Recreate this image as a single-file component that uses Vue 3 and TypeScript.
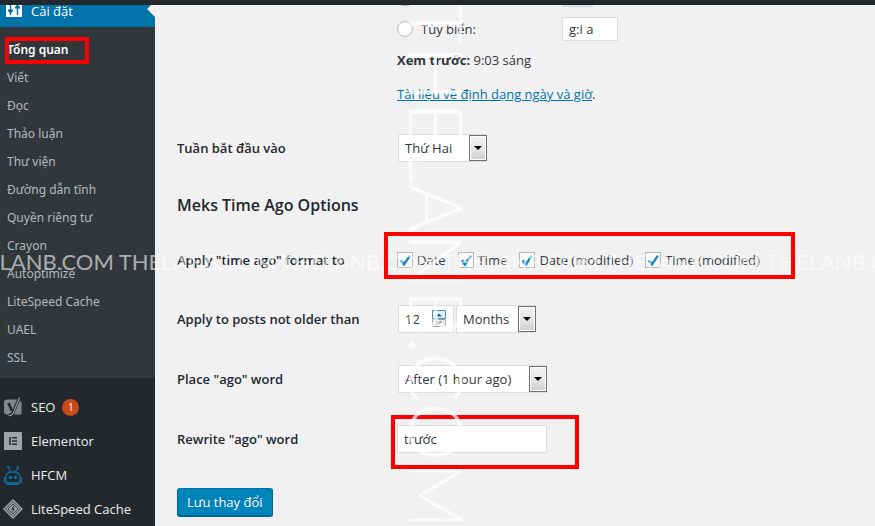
<script setup lang="ts">
import { ref } from 'vue'

interface Toggle {
  id: string
  label: string
  on: boolean
}

const submenu = [
  'Tổng quan', 'Viết', 'Đọc', 'Thảo luận', 'Thư viện', 'Đường dẫn tĩnh',
  'Quyền riêng tư', 'Crayon', 'Autoptimize', 'LiteSpeed Cache', 'UAEL', 'SSL',
]
const formats = ref<Toggle[]>([
  { id: 'date', label: 'Date', on: true },
  { id: 'time', label: 'Time', on: true },
  { id: 'date-mod', label: 'Date (modified)', on: true },
  { id: 'time-mod', label: 'Time (modified)', on: true },
])
const customFormat = ref('g:i a')
const weekStart = ref('Thứ Hai')
const amount = ref(12)
const unit = ref('Months')
const place = ref('After (1 hour ago)')
const word = ref('trước')
const stamp = 'THELANB.COM '
</script>

<template>
  <div class="page">
    <div class="topbar"></div>
    <div class="body">
      <nav class="sidebar">
        <a href="#" class="current">
          <svg class="icon" viewBox="0 0 20 20" aria-hidden="true">
            <path fill="#fff" d="M3 2h16v16H3z" />
            <path stroke="#0073aa" stroke-width="1.4" d="M7.500 4v12M14.500 4v12" />
            <path stroke="#0073aa" stroke-width="2" d="M5 11.500h5M12 8.500h5" />
            <path fill="#0073aa" d="M5.500 12h4L7.500 15zM12.500 8h4L14.500 5z" />
          </svg>
          <span>Cài đặt</span>
        </a>
        <ul class="submenu">
          <li v-for="(item, i) in submenu" :key="item" :class="{ active: i === 0 }">
            <a href="#">{{ item }}</a>
          </li>
        </ul>
        <ul class="plugins">
          <li>
            <a href="#">
              <svg class="icon" viewBox="0 0 20 20" aria-hidden="true">
                <path fill="#82878c" d="M4 2.500h11L10 16l-2 1.500H4q-3 0-3-3v-9q0-3 3-3zM17 3.500q1.500 1 1.500 2.500v11.500H11z" />
                <path fill="none" stroke="#23282d" stroke-width="2.600" d="M5.500 6l3.500 8M16 1L10.500 14.500Q9 18 6 18" />
                <path fill="none" stroke="#a0a5aa" stroke-width="1.100" d="M16.500 .5L11 14.500Q9 19 5.500 18.800" />
              </svg>
              <span>SEO</span><span class="badge">1</span>
            </a>
          </li>
          <li>
            <a href="#">
              <svg class="icon" viewBox="0 0 20 20" aria-hidden="true">
                <path fill="#a0a5aa" d="M1 1h18v18H1z" />
                <path stroke="#23282d" stroke-width="1.600" d="M7 6v8M9 6.800h5M9 10h5M9 13.200h5" />
              </svg>
              <span>Elementor</span>
            </a>
          </li>
          <li>
            <a href="#">
              <svg class="icon" viewBox="0 0 20 20" aria-hidden="true">
                <g fill="none" stroke="#0c6d9e" stroke-width="1.300">
                  <path d="M3 18v-6q0-5 7-5t7 5v6zM1.500 12v5.500M18.500 12v5.500M4 19.500h12M8 7L5.500 2.500M12 7l3-4" />
                </g>
                <g fill="#0c6d9e">
                  <circle cx="7.500" cy="12.500" r="1.800" /><circle cx="12.500" cy="12.500" r="1.800" />
                  <circle cx="5.200" cy="2" r="1.300" /><circle cx="15" cy="2.500" r="1.300" />
                </g>
              </svg>
              <span>HFCM</span>
            </a>
          </li>
          <li>
            <a href="#">
              <svg class="icon" viewBox="0 0 20 20" aria-hidden="true">
                <path fill="#a0a5aa" d="M10 0l10 10-10 10L0 10z" />
                <g fill="none" stroke="#23282d" stroke-width=".8">
                  <path d="M10 2.500l7.500 7.500-7.500 7.500L2.500 10zM10 5l5 5-5 5-5-5z" />
                </g>
                <path fill="#23282d" d="M11 6l-3 4.500h1.800L9 14l3-4.500h-1.800z" />
              </svg>
              <span>LiteSpeed Cache</span>
            </a>
          </li>
        </ul>
      </nav>

      <form class="main" @submit.prevent>
        <div class="row time-format">
          <div></div>
          <div class="field">
            <div class="choice cut">
              <span class="radio-end"></span><span class="disabled-end"></span>
            </div>
            <div class="choice">
              <label class="radio-label"><input type="radio" name="time-format" /><span>Tùy biến:</span></label>
              <input v-model="customFormat" class="text short" type="text" aria-label="Tùy biến" />
            </div>
            <p class="preview"><strong>Xem trước:</strong> 9:03 sáng</p>
            <p class="docs"><a href="#">Tài liệu về định dạng ngày và giờ</a>.</p>
          </div>
        </div>

        <div class="row week">
          <label for="week">Tuần bắt đầu vào</label>
          <div class="field">
            <span class="select">
              <select id="week" v-model="weekStart" class="w-week"><option>Thứ Hai</option></select>
              <i class="arrow"></i>
            </span>
          </div>
        </div>

        <h2>Meks Time Ago Options</h2>

        <div class="row formats">
          <span class="label">Apply "time ago" format to</span>
          <div class="field checks">
            <label v-for="f in formats" :key="f.id" class="check">
              <span class="tick">
                <input v-model="f.on" type="checkbox" />
                <svg v-if="f.on" viewBox="0 0 16 16" aria-hidden="true">
                  <path fill="#1e8cbe" d="M2.500 9L5 7.500 7 10 12 3l1.800 1.200L7.500 14H6.300z" />
                </svg>
              </span>
              <span>{{ f.label }}</span>
            </label>
          </div>
        </div>

        <div class="row">
          <label for="amount">Apply to posts not older than</label>
          <div class="field pair">
            <span class="number">
              <input id="amount" v-model="amount" type="number" />
              <svg viewBox="0 0 14 18" aria-hidden="true">
                <path fill="#e3eef5" stroke="#4a90b8" d="M.5 .5h13v8H.5z" />
                <path fill="#eee" stroke="#a5a5a5" d="M.5 9.500h13v7H.5z" />
                <path fill="#236a94" d="M4 6.500h6L7 3.500z" />
                <path fill="#456" d="M4 11.500h6L7 14.500z" />
              </svg>
            </span>
            <span class="select">
              <select v-model="unit" class="w-unit" aria-label="Unit"><option>Months</option></select>
              <i class="arrow"></i>
            </span>
          </div>
        </div>

        <div class="row">
          <label for="place">Place "ago" word</label>
          <div class="field">
            <span class="select">
              <select id="place" v-model="place" class="w-place"><option>After (1 hour ago)</option></select>
              <i class="arrow"></i>
            </span>
          </div>
        </div>

        <div class="row">
          <label for="word">Rewrite "ago" word</label>
          <div class="field rewrite">
            <input id="word" v-model="word" class="text long" type="text" />
          </div>
        </div>

        <button type="submit" class="save">Lưu thay đổi</button>
      </form>
    </div>
    <div class="mark-h" aria-hidden="true"><span v-for="n in 6" :key="n">{{ stamp }}</span></div>
    <div class="mark-v" aria-hidden="true">{{ stamp }}</div>
  </div>
</template>

<style>
body {
  background: #f1f1f1;
}
</style>

<style scoped>
*,
*::after {
  box-sizing: border-box;
}
.page {
  position: relative;
  height: 100vh;
  overflow: hidden;
  display: flex;
  flex-direction: column;
  font: 13px/20px "Open Sans", "Noto Sans", sans-serif;
  color: #32373c;
  background: #f1f1f1;
}
.topbar {
  position: relative;
  z-index: 1;
  flex: none;
  height: 5px;
  background: #23282d;
}
.body {
  flex: 1;
  display: flex;
}
ul {
  list-style: none;
  margin: 0;
  padding: 0;
}
.sidebar {
  flex: none;
  width: 155px;
  background: #23282d;
}
.sidebar a {
  text-decoration: none;
}
.icon {
  flex: none;
  width: 20px;
  height: 20px;
}
.current {
  position: relative;
  display: flex;
  align-items: flex-end;
  gap: 8px;
  height: 22px;
  padding: 0 0 6px 3px;
  background: #0073aa;
  color: #fff;
}
.current .icon {
  margin-bottom: 2px;
}
.current::after {
  content: "";
  position: absolute;
  right: 0;
  top: 0;
  width: 8px;
  height: 12px;
  background: #f1f1f1;
  clip-path: polygon(100% 0, 50% 0, 0 33%, 100% 100%);
}
.submenu {
  padding: 9px 0 6px;
  background: #32373c;
}
.submenu li {
  position: relative;
}
.submenu a {
  display: block;
  padding: 4px 7px;
  font-family: "Noto Sans", sans-serif;
  font-size: 12px;
  color: #b4b9be;
}
.submenu .active a {
  color: #fff;
  font-weight: 600;
}
.submenu .active::after {
  content: "";
  position: absolute;
  left: 5px;
  top: 1px;
  width: 84px;
  height: 27px;
  border: 4px solid #f00;
}
.plugins {
  padding-top: 12px;
}
.plugins a {
  display: flex;
  align-items: center;
  gap: 8px;
  height: 34px;
  padding-left: 3px;
  color: #eee;
}
.badge {
  width: 17px;
  height: 17px;
  margin-left: -1px;
  border-radius: 9px;
  background: #ca4a1f;
  color: #fff;
  font-size: 10px;
  line-height: 17px;
  text-align: center;
}
.main {
  flex: 1;
  min-width: 0;
  padding-left: 22px;
}
.row {
  display: grid;
  grid-template-columns: 220px 1fr;
  align-items: center;
  min-height: 60px;
}
.row > label,
.row > .label {
  font-weight: 600;
  color: #23282d;
}
.row.formats {
  min-height: 59px;
}
.field {
  position: relative;
  display: flex;
  align-items: center;
}
.time-format .field {
  display: block;
}
.choice {
  display: flex;
  align-items: center;
  height: 24px;
}
.cut {
  height: 12px;
  align-items: flex-start;
}
.radio-end {
  width: 8px;
  height: 1px;
  margin-left: 4px;
  background: #b4b9be;
}
.disabled-end {
  width: 31px;
  height: 2px;
  margin-left: 153px;
  background: #dcdcdc;
}
.radio-label {
  display: flex;
  align-items: center;
  gap: 8px;
  width: 165px;
}
input,
select,
button {
  font: inherit;
  color: inherit;
  margin: 0;
}
input[type="radio"] {
  appearance: none;
  width: 16px;
  height: 16px;
  border: 1px solid #b4b9be;
  border-radius: 50%;
  background: #fff;
}
p {
  margin: 0;
}
strong {
  font-weight: 700;
}
.preview {
  padding-top: 9px;
}
.docs {
  padding-top: 14px;
}
.docs a {
  color: #0073aa;
}
.text {
  border: 1px solid #ddd;
  background: #fff;
  padding: 0 6px;
}
.short {
  width: 56px;
  height: 24px;
}
.long {
  width: 150px;
  height: 28px;
}
.week {
  padding-top: 14px;
  min-height: 74px;
}
.select {
  position: relative;
  display: inline-flex;
  margin-left: 1px;
}
select {
  appearance: none;
  height: 28px;
  padding: 0 20px 0 6px;
  border: 1px solid #ddd;
  border-radius: 0;
  background: #fff;
}
.w-week {
  width: 89px;
}
.w-unit {
  width: 80px;
}
.w-place {
  width: 149px;
}
.arrow {
  position: absolute;
  right: 0;
  top: 1px;
  width: 18px;
  height: 26px;
  border: 1px solid #707070;
  box-shadow: inset 0 0 0 1px #fff;
  background: linear-gradient(#f2f2f2, #e6e6e6 50%, #cfcfcf);
  pointer-events: none;
}
.arrow::after {
  content: "";
  position: absolute;
  left: 4px;
  top: 10px;
  border: 4px solid transparent;
  border-top-color: #000;
  border-bottom-width: 0;
}
h2 {
  margin: 0;
  padding: 15px 0 13px;
  font-size: 16px;
  line-height: 24px;
  font-weight: 600;
  color: #23282d;
}
.checks {
  gap: 12px;
}
.checks::after {
  content: "";
  position: absolute;
  z-index: 1;
  left: -13px;
  top: -18px;
  width: 411px;
  height: 47px;
  border: 4px solid #f00;
  pointer-events: none;
}
.check {
  display: flex;
  align-items: center;
  gap: 4px;
}
.tick {
  position: relative;
  width: 16px;
  height: 16px;
}
.tick input {
  display: block;
  appearance: none;
  width: 16px;
  height: 16px;
  border: 1px solid #b4b9be;
  background: #fbfbfb;
}
.tick svg {
  position: absolute;
  inset: 0;
  pointer-events: none;
}
.pair {
  gap: 1px;
}
.number {
  position: relative;
  display: inline-flex;
  margin-left: 1px;
}
.number input {
  appearance: textfield;
  width: 56px;
  height: 28px;
  padding: 0 6px;
  border: 1px solid #ddd;
  background: #fff;
}
.number input::-webkit-inner-spin-button {
  appearance: none;
}
.number svg {
  position: absolute;
  right: 8px;
  top: 5px;
  width: 14px;
  height: 18px;
  pointer-events: none;
}
.rewrite::after {
  content: "";
  position: absolute;
  left: -6px;
  top: -10px;
  width: 188px;
  height: 54px;
  border: 4px solid #f00;
  pointer-events: none;
}
.save {
  display: block;
  height: 28px;
  margin-top: 19px;
  padding: 0 9px;
  border: 1px solid #006799;
  border-top-color: #0073aa;
  border-radius: 3px;
  background: #0085ba;
  box-shadow: 0 1px 0 #006799;
  color: #fff;
  line-height: 26px;
  text-shadow: 0 -1px 1px #006799;
}
.mark-h,
.mark-v {
  position: absolute;
  white-space: pre;
  pointer-events: none;
  font-family: Lato, sans-serif;
  color: rgba(255, 255, 255, 0.6);
}
.mark-h {
  left: -43px;
  top: 248px;
  font-size: 22px;
  line-height: 28px;
}
.mark-v {
  left: 398px;
  top: 2px;
  writing-mode: vertical-rl;
  font-size: 75px;
  line-height: 80px;
  font-weight: 300;
  color: rgba(255, 255, 255, 0.7);
}
</style>
